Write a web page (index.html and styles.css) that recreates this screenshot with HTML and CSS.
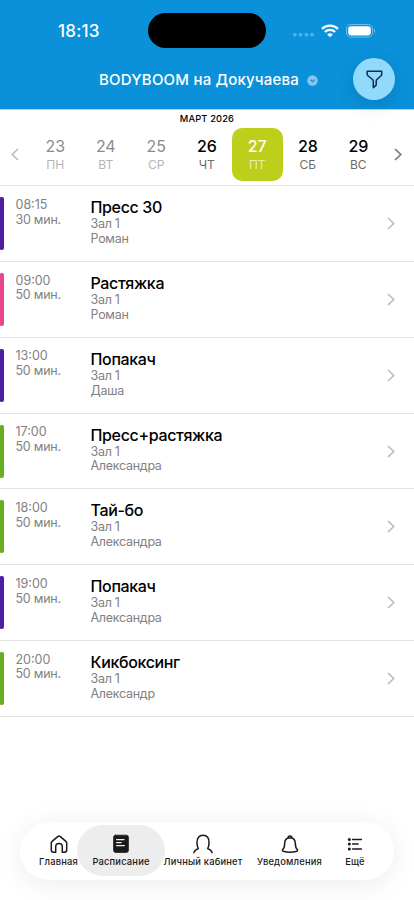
FILE: index.html
```html
<!DOCTYPE html>
<html lang="ru">
<head>
<meta charset="utf-8">
<meta name="viewport" content="width=device-width, initial-scale=1">
<title>Расписание</title>
<link rel="stylesheet" href="styles.css">
</head>
<body>
<div class="screen">
  <header class="header">
    <div class="status">
      <span class="clock">18:13</span>
      <span class="island"></span>
      <span class="indicators">
        <svg width="22" height="4" viewBox="0 0 22 4" fill="#4fb2e7"><rect width="3.6" height="3.6" rx="1"/><rect x="5.8" width="3.6" height="3.6" rx="1"/><rect x="11.6" width="3.6" height="3.6" rx="1"/><rect x="17.2" width="3.6" height="3.6" rx="1"/></svg>
        <svg class="wifi" width="18" height="14" viewBox="0 0 18 14" fill="none" stroke="#fff" stroke-width="2.3"><path d="M1 4.9a11.4 11.4 0 0 1 16 0M3.9 8a7.3 7.3 0 0 1 10.2 0"/><path d="M9 13.2 6.2 10.5a4 4 0 0 1 5.6 0z" fill="#fff" stroke="none"/></svg>
        <svg width="30" height="14" viewBox="0 0 30 14"><rect x=".5" y=".5" width="26" height="12.6" rx="4.2" fill="none" stroke="#6bbfeb"/><rect x="2.2" y="2.2" width="22.6" height="9.2" rx="2.8" fill="#fff"/><path d="M28 4.7c1.7.7 1.7 3.5 0 4.2z" fill="#6bbfeb"/></svg>
      </span>
    </div>
    <div class="club">
      <span class="club-name">BODYBOOM на Докучаева</span>
      <svg width="11" height="11" viewBox="0 0 11 11"><circle cx="5.5" cy="5.5" r="5.2" fill="#84c9ed"/><path d="m3.4 4.7 2.1 2 2.1-2" fill="none" stroke="#1686c2" stroke-width="1.1"/></svg>
    </div>
    <div class="filter">
      <svg width="17" height="19" viewBox="0 0 17 19" fill="none" stroke="#112b4b" stroke-width="1.5" stroke-linejoin="round"><path d="M1.2 1.3h14.5v2.9c0 .8-.3 1.2-.9 1.8l-3.9 3.5c-.5.5-.7.9-.7 1.5v4.1l-2.9 2.5V11c0-.6-.2-1-.7-1.5L2.200 6c-.7-.6-1-1-1-1.8z"/></svg>
    </div>
  </header>

  <section class="calendar">
    <div class="month">МАРТ 2026</div>
    <div class="week">
      <svg class="prev" width="8" height="13" viewBox="0 0 8 13"><path d="M7 1 1.2 6.5 7 12"/></svg>
      <div class="day past"><b>23</b><span>ПН</span></div>
      <div class="day past"><b>24</b><span>ВТ</span></div>
      <div class="day past"><b>25</b><span>СР</span></div>
      <div class="day"><b>26</b><span>ЧТ</span></div>
      <div class="day current"><b>27</b><span>ПТ</span></div>
      <div class="day"><b>28</b><span>СБ</span></div>
      <div class="day"><b>29</b><span>ВС</span></div>
      <svg class="next" width="8" height="13" viewBox="0 0 8 13"><path d="m1 1 5.8 5.5L1 12"/></svg>
    </div>
  </section>

  <main class="lessons">
    <article class="lesson violet">
      <div class="time">08:15<br>30 мин.</div>
      <div class="info"><h2>Пресс 30</h2><p>Зал 1</p><p>Роман</p></div>
      <svg class="chevron" width="8" height="13" viewBox="0 0 8 13"><path d="m1 1 5.7 5.5L1 12"/></svg>
    </article>
    <article class="lesson pink">
      <div class="time">09:00<br>50 мин.</div>
      <div class="info"><h2>Растяжка</h2><p>Зал 1</p><p>Роман</p></div>
      <svg class="chevron" width="8" height="13" viewBox="0 0 8 13"><path d="m1 1 5.7 5.5L1 12"/></svg>
    </article>
    <article class="lesson violet">
      <div class="time">13:00<br>50 мин.</div>
      <div class="info"><h2>Попакач</h2><p>Зал 1</p><p>Даша</p></div>
      <svg class="chevron" width="8" height="13" viewBox="0 0 8 13"><path d="m1 1 5.7 5.5L1 12"/></svg>
    </article>
    <article class="lesson green">
      <div class="time">17:00<br>50 мин.</div>
      <div class="info"><h2>Пресс+растяжка</h2><p>Зал 1</p><p>Александра</p></div>
      <svg class="chevron" width="8" height="13" viewBox="0 0 8 13"><path d="m1 1 5.7 5.5L1 12"/></svg>
    </article>
    <article class="lesson green">
      <div class="time">18:00<br>50 мин.</div>
      <div class="info"><h2>Тай-бо</h2><p>Зал 1</p><p>Александра</p></div>
      <svg class="chevron" width="8" height="13" viewBox="0 0 8 13"><path d="m1 1 5.7 5.5L1 12"/></svg>
    </article>
    <article class="lesson violet">
      <div class="time">19:00<br>50 мин.</div>
      <div class="info"><h2>Попакач</h2><p>Зал 1</p><p>Александра</p></div>
      <svg class="chevron" width="8" height="13" viewBox="0 0 8 13"><path d="m1 1 5.7 5.5L1 12"/></svg>
    </article>
    <article class="lesson green">
      <div class="time">20:00<br>50 мин.</div>
      <div class="info"><h2>Кикбоксинг</h2><p>Зал 1</p><p>Александр</p></div>
      <svg class="chevron" width="8" height="13" viewBox="0 0 8 13"><path d="m1 1 5.7 5.5L1 12"/></svg>
    </article>
  </main>

  <nav class="tabs">
    <div class="tab home">
      <svg width="20" height="20" viewBox="0 0 20 20"><path d="M2.3 9c0-.7.3-1.2.8-1.6L8.7 2.600c.9-.8 1.7-.8 2.600 0l5.600 4.800c.5.4.8.9.8 1.600v7c0 1.300-.8 2.200-2.100 2.200h-2.300v-5.500c0-2-1.300-3.200-3.300-3.200s-3.300 1.200-3.300 3.200v5.500H4.400c-1.300 0-2.100-.9-2.100-2.200z"/></svg>
      <span>Главная</span>
    </div>
    <div class="tab active">
      <svg width="20" height="20" viewBox="0 0 20 20"><rect x="2.6" y="1.2" width="14.8" height="17.2" rx="2" fill="#1a1a1a" stroke="#1a1a1a" stroke-width=".8"/><path d="M5.6 5.6h7.4M5.6 8.6h4.6M5.6 11.6h7.8" stroke="#ededed" stroke-width="1.3"/></svg>
      <span>Расписание</span>
    </div>
    <div class="tab profile">
      <svg width="20" height="20" viewBox="0 0 20 20"><path d="M.9 18.6c.5-1.8 2-3.2 4.4-4C4 12.6 4 10.5 4 8.5 4 4 6 1.3 10 1.3s6 2.7 6 7.2c0 2 0 4.1-1.3 6.1 2.4.8 3.9 2.2 4.4 4"/></svg>
      <span>Личный кабинет</span>
    </div>
    <div class="tab notices">
      <svg width="20" height="20" viewBox="0 0 20 20"><path d="M10 3.8c-3.6 0-5.2 2.4-5.3 5.5-.1 3.3-.5 5-2 6.5-.5.7-.3 1.2.6 1.5 4.3 1.2 9.1 1.2 13.4 0 .9-.3 1.1-.8.6-1.5-1.5-1.5-1.9-3.2-2-6.5-.1-3.1-1.7-5.5-5.3-5.5zM8 3.9c.1-2.5 3.900-2.500 4 0"/></svg>
      <span>Уведомления</span>
    </div>
    <div class="tab more">
      <svg width="20" height="20" viewBox="0 0 20 20"><path d="M7.6 5.4h8.8M7.6 10.1h5.5M7.6 14.900h8.800"/><g fill="#1a1a1a" stroke="none"><circle cx="4.3" cy="5.4" r="1.5"/><circle cx="4.3" cy="10.1" r="1.5"/><circle cx="4.3" cy="14.9" r="1.5"/></g></svg>
      <span>Ещё</span>
    </div>
  </nav>
</div>
</body>
</html>
```
FILE: styles.css
```css
* { box-sizing: border-box; margin: 0; padding: 0; }
body { background: #fff; font-family: Inter, "Liberation Sans", sans-serif; color: #000; }
svg { display: block; flex: none; }
.screen { position: relative; width: 414px; height: 900px; overflow: hidden; display: flex; flex-direction: column; }

.header { position: relative; height: 109px; background: #0a91da; color: #fff; flex: none; }
.status { display: flex; align-items: center; height: 48px; padding: 13px 0 0 58px; }
.clock { width: 90px; font-size: 17px; font-weight: 550; line-height: 20px; letter-spacing: .2px; }
.island { width: 118px; height: 35px; border-radius: 18px; background: #000; }
.indicators { display: flex; align-items: center; margin-left: 27px; }
.indicators svg:first-child { margin-top: 9px; }
.wifi { margin: 0 7px 0 6px; }
.club { display: flex; align-items: center; height: 24px; margin-top: 20px; padding-left: 99px; gap: 7px; }
.club-name { width: 201px; font-size: 15px; font-weight: 500; line-height: 24px; letter-spacing: .2px; white-space: nowrap; }
.filter { position: absolute; z-index: 2; left: 353px; top: 58px; width: 42px; height: 42px; border-radius: 50%; background: #92dafc; box-shadow: 0 6px 20px rgba(0, 0, 0, .13); display: flex; align-items: center; justify-content: center; }

.calendar { height: 76px; border-top: 1px solid #a9daf6; padding-top: 3px; flex: none; }
.month { text-align: center; font-size: 9.3px; font-weight: 500; line-height: 12px; letter-spacing: .15px; }
.week { display: flex; align-items: center; margin-top: 3px; padding-left: 11px; }
.week svg, .chevron { fill: none; stroke: #bdbdbd; stroke-width: 1.7; }
.week .prev { margin-right: 11px; }
.week .next { margin-left: 10px; stroke: #777; }
.day { width: 50.5px; height: 53px; border-radius: 10px; display: flex; flex-direction: column; align-items: center; padding-top: 8px; flex: none; }
.day b { font-size: 16px; font-weight: 500; line-height: 20px; letter-spacing: -.1px; }
.day span { font-size: 12px; line-height: 18px; color: #6c6c6c; }
.day.past b { color: #8b8b8b; font-weight: 400; }
.day.past span { color: #b5b5b5; }
.day.current { background: #bdcf1b; }
.day.current b { color: #fff; }
.day.current span { color: #e6edab; }

.lessons { border-top: 1px solid #e3e3e5; padding-top: .3px; }
.lesson { display: flex; height: 75.8px; padding-top: 11px; border-bottom: 1px solid #e3e3e5; }
.lesson::before { content: ""; width: 4px; height: 53px; border-radius: 1px 2px 2px 1px; background: var(--mark); }
.violet { --mark: #4f1ea3; }
.pink { --mark: #ea468d; }
.green { --mark: #68af1f; }
.time { width: 75px; margin-left: 11.5px; padding-top: .6px; font-size: 12.5px; line-height: 14.8px; letter-spacing: -.25px; color: #818181; }
.time::first-line { letter-spacing: 0; }
.info { flex: 1; }
.info h2 { font-size: 16px; font-weight: 500; line-height: 20px; letter-spacing: -.35px; }
.info p { font-size: 12.5px; line-height: 14.8px; letter-spacing: -.28px; color: #818181; }
.chevron { margin: 20px 19px 0 0; }

.tabs { position: absolute; left: 20px; top: 822px; width: 374px; height: 58px; border-radius: 29px; background: #fff; box-shadow: 0 4px 28px rgba(0, 0, 0, .08); display: flex; align-items: flex-start; padding-top: 3px; }
.tab { display: flex; flex-direction: column; align-items: center; height: 51px; padding-top: 9px; flex: none; }
.tab svg { fill: none; stroke: #1a1a1a; stroke-width: 1.5; stroke-linejoin: round; stroke-linecap: round; }
.tab span { font-size: 9.4px; font-weight: 500; line-height: 12px; margin-top: 1.5px; white-space: nowrap; letter-spacing: .17px; color: #1a1a1a; }
.home { width: 39px; margin-left: 19px; }
.active { width: 88px; border-radius: 25.5px; background: #ededed; margin-left: -1px; }
.profile { width: 80px; margin-left: -2px; }
.notices { width: 67px; margin-left: 13px; }
.more { width: 20px; margin-left: 22px; }
```
